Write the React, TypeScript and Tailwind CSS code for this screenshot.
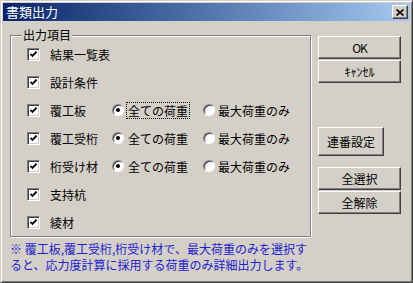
import React from "react";

const FONT = "font-['Noto_Sans_CJK_JP','MS_UI_Gothic',sans-serif]";

const items = [
  { label: "結果一覧表", radio: false, focus: false },
  { label: "設計条件", radio: false, focus: false },
  { label: "覆工板", radio: true, focus: true },
  { label: "覆工受桁", radio: true, focus: false },
  { label: "桁受け材", radio: true, focus: false },
  { label: "支持杭", radio: false, focus: false },
  { label: "綾材", radio: false, focus: false },
];

function CheckBox() {
  return (
    <div className="w-[13px] h-[13px] shrink-0 flex items-center justify-center bg-white border border-t-[#808080] border-l-[#808080] border-r-white border-b-white shadow-[inset_1px_1px_0_#404040,inset_-1px_-1px_0_#d4d0c8]">
      <svg width="9" height="9" viewBox="0 0 9 9">
        <path d="M1.5 3.8 L3.5 5.8 L7.6 1.7" fill="none" stroke="#000" strokeWidth="1.9" />
      </svg>
    </div>
  );
}

function Radio({ on }: { on: boolean }) {
  return (
    <div className="w-[12px] h-[12px] shrink-0 rounded-full flex items-center justify-center bg-white border border-t-[#808080] border-l-[#808080] border-r-white border-b-white shadow-[inset_1px_1px_0_#404040]">
      {on && <div className="w-[4px] h-[4px] rounded-full bg-black" />}
    </div>
  );
}

function Btn({ children, className }: { children: React.ReactNode; className: string }) {
  return (
    <div
      className={
        "flex items-center justify-center text-[12px] leading-[14px] text-black border border-t-white border-l-white border-r-[#404040] border-b-[#404040] shadow-[inset_-1px_-1px_0_#808080] " +
        className
      }
    >
      {children}
    </div>
  );
}

export default function App() {
  return (
    <div className={"w-[413px] h-[283px] bg-[#d4d0c8] p-[2px] border border-t-[#d4d0c8] border-l-[#d4d0c8] border-r-[#404040] border-b-[#404040] shadow-[inset_1px_1px_0_#fff,inset_-1px_-1px_0_#808080] " + FONT}>
      {/* title bar */}
      <div className="h-[18px] flex items-center justify-between bg-linear-to-r from-[#0a246a] to-[#a6caf0]">
        <span className="pl-[3px] text-[13px] leading-[16px] text-white">書類出力</span>
        <div className="mr-[2px] w-[16px] h-[14px] flex items-center justify-center bg-[#d4d0c8] border border-t-white border-l-white border-r-[#404040] border-b-[#404040] shadow-[inset_-1px_-1px_0_#808080]">
          <svg width="8" height="7" viewBox="0 0 8 7">
            <path d="M0.5 0.5 L7.5 6.5 M7.5 0.5 L0.5 6.5" stroke="#000" strokeWidth="1.6" />
          </svg>
        </div>
      </div>

      <div className="flex">
        {/* left column */}
        <div className="ml-[7px] mt-[14px]">
          <div className="relative w-[301px] h-[202px] pt-[4px] border border-[#808080] shadow-[inset_1px_1px_0_#fff,1px_1px_0_#fff]">
            <span className="absolute left-[11px] top-[-8px] px-[1px] bg-[#d4d0c8] text-[12px] leading-[14px] text-black">
              出力項目
            </span>
            {items.map((it) => (
              <div key={it.label} className="h-[28px] flex items-center pl-[16px] text-[12px] leading-[13px] text-black">
                <CheckBox />
                <span className="ml-[10px] w-[62px]">{it.label}</span>
                {it.radio && (
                  <>
                    <div className="w-[91px] flex items-center">
                      <Radio on />
                      <span
                        className={
                          "ml-[2px] px-[1px] py-[1px] border border-dotted " +
                          (it.focus ? "border-black" : "border-transparent")
                        }
                      >
                        全ての荷重
                      </span>
                    </div>
                    <div className="flex items-center">
                      <Radio on={false} />
                      <span className="ml-[3px]">最大荷重のみ</span>
                    </div>
                  </>
                )}
              </div>
            ))}
          </div>
          <div className="mt-[4px] text-[12px] leading-[16px] text-[#2020d0] whitespace-nowrap">
            <div>※ 覆工板,覆工受桁,桁受け材で、最大荷重のみを選択す</div>
            <div>ると、応力度計算に採用する荷重のみ詳細出力します。</div>
          </div>
        </div>

        {/* right column */}
        <div className="ml-[7px] mt-[15px] flex flex-col">
          <Btn className="w-[83px] h-[23px] tracking-[-1px]">OK</Btn>
          <Btn className="w-[83px] h-[23px] mt-[1px]">ｷｬﾝｾﾙ</Btn>
          <Btn className="w-[66px] h-[29px] mt-[44px]">連番設定</Btn>
          <Btn className="w-[83px] h-[23px] mt-[11px]">全選択</Btn>
          <Btn className="w-[83px] h-[23px] mt-[1px]">全解除</Btn>
        </div>
      </div>
    </div>
  );
}
